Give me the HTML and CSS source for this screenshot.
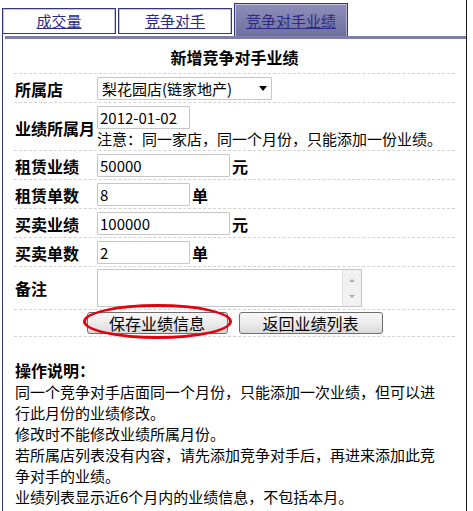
FILE: index.html
```html
<!DOCTYPE html>
<html lang="zh-CN">
<head>
    <meta charset="UTF-8">
    <title>竞争对手业绩</title>
    <link rel="stylesheet" href="styles.css">
</head>
<body>
    <div class="page">
        <div class="tabs">
            <a class="tab" href="#">成交量</a>
            <a class="tab" href="#">竞争对手</a>
            <a class="tab active" href="#">竞争对手业绩</a>
        </div>
        <div class="tab-band"></div>

        <div class="panel">
            <form class="form" action="#" method="POST">
                <div class="form-title">新增竞争对手业绩</div>

                <div class="row">
                    <label for="store">所属店</label>
                    <span class="select">
                        <select id="store" name="store">
                            <option>梨花园店(链家地产)</option>
                        </select>
                    </span>
                </div>

                <div class="row row-month">
                    <label for="month">业绩所属月</label>
                    <div class="field">
                        <input class="text w-short" type="text" id="month" name="month" value="2012-01-02">
                        <div class="note">注意：同一家店，同一个月份，只能添加一份业绩。</div>
                    </div>
                </div>

                <div class="row">
                    <label for="rentAmount">租赁业绩</label>
                    <input class="text w-long" type="text" id="rentAmount" name="rentAmount" value="50000">
                    <span class="unit">元</span>
                </div>

                <div class="row">
                    <label for="rentCount">租赁单数</label>
                    <input class="text w-short" type="text" id="rentCount" name="rentCount" value="8">
                    <span class="unit">单</span>
                </div>

                <div class="row">
                    <label for="saleAmount">买卖业绩</label>
                    <input class="text w-long" type="text" id="saleAmount" name="saleAmount" value="100000">
                    <span class="unit">元</span>
                </div>

                <div class="row">
                    <label for="saleCount">买卖单数</label>
                    <input class="text w-short" type="text" id="saleCount" name="saleCount" value="2">
                    <span class="unit">单</span>
                </div>

                <div class="row row-memo">
                    <label for="memo">备注</label>
                    <div class="memo">
                        <textarea id="memo" name="memo"></textarea>
                        <div class="scroll">
                            <span class="arrow-up"></span>
                            <span class="arrow-down"></span>
                        </div>
                    </div>
                </div>

                <div class="row actions">
                    <span class="hl">
                        <button type="submit" class="btn btn-save">保存业绩信息</button>
                        <span class="mark"></span>
                    </span>
                    <button type="button" class="btn btn-back">返回业绩列表</button>
                </div>
            </form>

            <div class="help">
                <b>操作说明：</b><br>
                同一个竞争对手店面同一个月份，只能添加一次业绩，但可以进行此月份的业绩修改。<br>
                修改时不能修改业绩所属月份。<br>
                若所属店列表没有内容，请先添加竞争对手后，再进来添加此竞争对手的业绩。<br>
                业绩列表显示近6个月内的业绩信息，不包括本月。
            </div>
        </div>
    </div>
</body>
</html>
```

FILE: styles.css
```css
body {
    margin: 0;
    font-family: "Noto Sans CJK SC", sans-serif;
    font-size: 15px;
    color: #000;
    background-color: #fff;
    text-spacing-trim: space-all;
}
.page {
    width: 464px;
    margin-left: 2px;
    min-height: 511px;
    border-right: 1px solid #1a1a1a;
}

/* tabs */
.tabs {
    display: flex;
    align-items: flex-end;
    gap: 2px;
    height: 34px;
}
.tab {
    box-sizing: border-box;
    width: 114px;
    height: 26px;
    border: 1px solid #35357a;
    box-shadow: inset 1px 1px 0 #c4c4de, inset -1px 0 0 #c4c4de;
    background-color: #fff;
    color: #2b2b85;
    text-align: center;
    font-size: 15px;
    line-height: 24px;
}
.tab.active {
    height: 33px;
    margin-bottom: -2px;
    padding-top: 4px;
    line-height: 26px;
    border-bottom: none;
    background: linear-gradient(#8e8eba, #7070a0);
    box-shadow: inset 1px 1px 0 #c4c4de, inset -1px 0 0 #b0b0d0;
}
.tab-band {
    height: 3px;
    padding: 2px 0 0 2px;
    border-left: 1px solid #35357a;
    background-color: #7e7eaa;
    background-clip: content-box;
}

/* panel */
.panel {
    border-left: 1px solid #35357a;
    padding-bottom: 20px;
}
.form {
    margin: 0 11px;
}
.form-title {
    text-align: center;
    font-weight: bold;
    font-size: 16px;
    line-height: 24px;
    padding: 6px 0 4px;
    border-bottom: 1px dashed #d2d2d2;
}
.row {
    display: flex;
    align-items: center;
    padding: 3px 0 2px;
    line-height: 20px;
    border-bottom: 1px dashed #d2d2d2;
}
.row label {
    box-sizing: border-box;
    width: 83px;
    flex-shrink: 0;
    padding-left: 1px;
    font-weight: bold;
    font-size: 16px;
}
.row-month {
    padding-bottom: 1px;
}
.row-memo {
    padding: 2px 0;
}
.field {
    display: flex;
    flex-direction: column;
    align-items: flex-start;
}
.note {
    line-height: 20px;
}
.text {
    box-sizing: border-box;
    height: 23px;
    padding: 0 2px;
    border: 1px solid #c6c6c6;
    border-radius: 1px;
    font-family: inherit;
    font-size: 15px;
    color: #000;
}
.w-long {
    width: 133px;
}
.w-short {
    width: 93px;
}
.unit {
    margin-left: 2px;
    font-weight: bold;
    font-size: 16px;
}

/* select */
.select {
    position: relative;
    display: inline-block;
    height: 23px;
}
.select select {
    appearance: none;
    box-sizing: border-box;
    width: 175px;
    height: 23px;
    padding: 0 0 0 4px;
    border: 1px solid #c6c6c6;
    border-radius: 1px;
    background-color: #fff;
    font-family: inherit;
    font-size: 15px;
    color: #000;
}
.select::after {
    content: "";
    position: absolute;
    right: 5px;
    top: 9px;
    border-left: 4px solid transparent;
    border-right: 4px solid transparent;
    border-top: 5px solid #000;
}

/* memo */
.memo {
    box-sizing: border-box;
    display: flex;
    width: 265px;
    height: 38px;
    border: 1px solid #c6c6c6;
}
.memo textarea {
    flex: 1;
    border: none;
    resize: none;
    outline: none;
    font-family: inherit;
}
.scroll {
    display: flex;
    flex-direction: column;
    justify-content: space-between;
    align-items: center;
    width: 19px;
    padding: 9px 0 8px;
    box-sizing: border-box;
    background-color: #f1f1f1;
    border-left: 1px solid #e2e2e2;
}
.arrow-up {
    border-left: 3px solid transparent;
    border-right: 3px solid transparent;
    border-bottom: 3px solid #a8a8a8;
}
.arrow-down {
    border-left: 3px solid transparent;
    border-right: 3px solid transparent;
    border-top: 3px solid #a8a8a8;
}

/* buttons */
.actions {
    justify-content: center;
    gap: 11px;
    padding: 2px 0 2px;
}
.hl {
    position: relative;
    display: inline-block;
}
.btn {
    box-sizing: border-box;
    display: block;
    height: 22px;
    padding: 0;
    border: 1px solid #6e6e6e;
    border-radius: 3px;
    background: linear-gradient(#f7f7f7 0%, #ececec 50%, #d9d9d9 100%);
    font-family: inherit;
    font-size: 16px;
    line-height: 19px;
    color: #000;
}
.btn-save {
    width: 141px;
}
.btn-back {
    width: 144px;
}
.mark {
    position: absolute;
    left: -4px;
    top: -8px;
    box-sizing: border-box;
    width: 149px;
    height: 35px;
    border: 3px solid #e4000f;
    border-radius: 50%;
    pointer-events: none;
}

/* help text */
.help {
    margin: 23px 0 0 12px;
    width: 425px;
    font-size: 15px;
    line-height: 21px;
}
.help b {
    font-size: 16px;
}
```
